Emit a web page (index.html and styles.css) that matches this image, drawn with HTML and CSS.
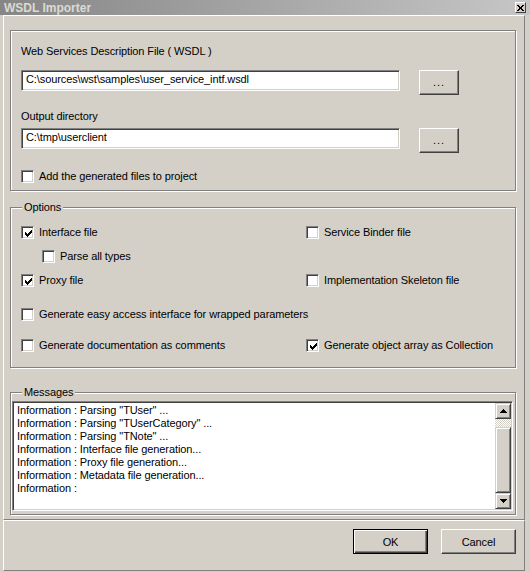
FILE: index.html
```html
<!DOCTYPE html>
<html>
<head>
	<title>WSDL Importer</title>
	<meta charset="UTF-8">
	<link rel="stylesheet" href="styles.css">
</head>
<body>
	<div id="window">
		<div id="title_bar">
			<span id="title">WSDL Importer</span>
			<div id="close_button">
				<svg width="7" height="6" viewBox="0 0 7 6" shape-rendering="crispEdges"><path d="M0 0h2v1h-2zM5 0h2v1h-2zM1 1h2v1h-2zM4 1h2v1h-2zM2 2h3v2h-3zM1 4h2v1h-2zM4 4h2v1h-2zM0 5h2v1h-2zM5 5h2v1h-2z" fill="#000"/></svg>
			</div>
		</div>

		<div id="client">
			<div id="file_panel" class="etched">
				<div class="caption">Web Services Description File ( WSDL )</div>
				<div class="path_row">
					<div class="edit">C:\sources\wst\samples\user_service_intf.wsdl</div>
					<div class="button browse">...</div>
				</div>
				<div class="caption output">Output directory</div>
				<div class="path_row output">
					<div class="edit">C:\tmp\userclient</div>
					<div class="button browse">...</div>
				</div>
				<div class="check add_files"><span class="box"></span>Add the generated files to project</div>
			</div>

			<fieldset id="options" class="group">
				<legend>Options</legend>
				<div class="options_grid">
					<div class="check"><span class="box checked"><svg width="9" height="9" viewBox="0 0 9 9" shape-rendering="crispEdges"><path d="M7 1h1v3h-1zM6 2h1v3h-1zM5 3h1v3h-1zM1 3h1v3h-1zM2 4h1v3h-1zM3 5h1v3h-1zM4 4h1v3h-1z" fill="#000"/></svg></span>Interface file</div>
					<div class="check"><span class="box"></span>Service Binder file</div>
					<div class="check nested"><span class="box"></span>Parse all types</div>
					<div></div>
					<div class="check"><span class="box checked"><svg width="9" height="9" viewBox="0 0 9 9" shape-rendering="crispEdges"><path d="M7 1h1v3h-1zM6 2h1v3h-1zM5 3h1v3h-1zM1 3h1v3h-1zM2 4h1v3h-1zM3 5h1v3h-1zM4 4h1v3h-1z" fill="#000"/></svg></span>Proxy file</div>
					<div class="check"><span class="box"></span>Implementation Skeleton file</div>
					<div class="check wide"><span class="box"></span>Generate easy access interface for wrapped parameters</div>
					<div class="check"><span class="box"></span>Generate documentation as comments</div>
					<div class="check"><span class="box checked"><svg width="9" height="9" viewBox="0 0 9 9" shape-rendering="crispEdges"><path d="M7 1h1v3h-1zM6 2h1v3h-1zM5 3h1v3h-1zM1 3h1v3h-1zM2 4h1v3h-1zM3 5h1v3h-1zM4 4h1v3h-1z" fill="#000"/></svg></span>Generate object array as Collection</div>
				</div>
			</fieldset>

			<fieldset id="messages" class="group">
				<legend>Messages</legend>
				<div class="listbox">
					<div class="lines">
						<div>Information : Parsing "TUser" ...</div>
						<div>Information : Parsing "TUserCategory" ...</div>
						<div>Information : Parsing "TNote" ...</div>
						<div>Information : Interface file generation...</div>
						<div>Information : Proxy file generation...</div>
						<div>Information : Metadata file generation...</div>
						<div>Information :</div>
					</div>
					<div class="scrollbar">
						<div class="arrow"><svg width="7" height="4" viewBox="0 0 7 4" shape-rendering="crispEdges"><path d="M3 0h1v1h1v1h1v1h1v1h-7v-1h1v-1h1v-1h1z" fill="#000"/></svg></div>
						<div class="track"></div>
						<div class="thumb"></div>
						<div class="arrow"><svg width="7" height="4" viewBox="0 0 7 4" shape-rendering="crispEdges"><path d="M0 0h7v1h-1v1h-1v1h-1v1h-1v-1h-1v-1h-1v-1h-1z" fill="#000"/></svg></div>
					</div>
				</div>
			</fieldset>
		</div>

		<div id="button_bar">
			<div class="button default">OK</div>
			<div class="button">Cancel</div>
		</div>
	</div>
</body>
</html>
```

FILE: styles.css
```css
body {
	margin: 0;
	background-color: #d4d0c8;
	font-family: "Liberation Sans", Arial, sans-serif;
	font-size: 11px;
	letter-spacing: -0.1px;
	color: black;
}

#window {
	width: 530px;
	height: 572px;
	display: flex;
	flex-direction: column;
	background-color: #d4d0c8;
}

#title_bar {
	height: 15px;
	display: flex;
	align-items: center;
	justify-content: space-between;
	padding: 0 4px 0 4px;
	background: linear-gradient( to right, #868686, #c6c6c6 );
}

#title {
	font-size: 12px;
	font-weight: bold;
	letter-spacing: 0;
	color: #dcdad4;
}

#close_button {
	width: 11px;
	height: 11px;
	box-sizing: border-box;
	display: flex;
	align-items: center;
	justify-content: center;
	background-color: #d4d0c8;
	border: 1px solid;
	border-color: #fff #404040 #404040 #fff;
}

/* raised client area under the caption */
#client {
	margin: 0 5px 0 3px;
	padding: 14px 8px 4px 6px;
	border: 1px solid;
	border-color: #fff #808080 #808080 #fff;
}

.etched {
	border: 1px solid #808080;
	box-shadow: inset 1px 1px 0 #fff, 1px 1px 0 #fff;
}

#file_panel {
	padding: 14px 8px 7px 10px;
}

.caption {
	line-height: 13px;
}

.caption.output {
	margin-top: 19px;
}

.path_row {
	display: flex;
	align-items: flex-start;
	gap: 19px;
	height: 21px;
	margin-top: 12px;
}

.path_row.output {
	margin-top: 5px;
}

.edit {
	width: 379px;
	height: 21px;
	box-sizing: border-box;
	padding-left: 4px;
	line-height: 17px;
	background-color: #fff;
	border: 1px solid;
	border-color: #808080 #fff #fff #808080;
	box-shadow: inset 1px 1px 0 #404040, inset -1px -1px 0 #d4d0c8;
	white-space: nowrap;
}

.button {
	width: 75px;
	height: 25px;
	box-sizing: border-box;
	display: flex;
	align-items: center;
	justify-content: center;
	background-color: #d4d0c8;
	border: 1px solid;
	border-color: #fff #404040 #404040 #fff;
	box-shadow: inset -1px -1px 0 #808080;
}

.button.browse {
	width: 40px;
	letter-spacing: 1px;
	padding-bottom: 2px;
}

.button.default {
	border-color: #000;
	box-shadow: inset 1px 1px 0 #fff, inset -1px -1px 0 #404040, inset -2px -2px 0 #808080;
}

.check {
	display: flex;
	align-items: center;
	gap: 5px;
	line-height: 13px;
	white-space: nowrap;
}

.add_files {
	margin-top: 21px;
}

.box {
	width: 13px;
	height: 13px;
	box-sizing: border-box;
	flex: none;
	display: flex;
	align-items: center;
	justify-content: center;
	background-color: #fff;
	border: 1px solid;
	border-color: #808080 #fff #fff #808080;
	box-shadow: inset 1px 1px 0 #404040, inset -1px -1px 0 #d4d0c8;
}

.box svg {
	margin: 1px 0 0 1px;
}

/* group boxes */
.group {
	margin: 0;
	padding: 0;
	min-inline-size: 0;
	border: 1px solid #808080;
	box-shadow: inset 1px 1px 0 #fff, 1px 1px 0 #fff;
}

.group legend {
	padding: 0 2px;
	line-height: 13px;
	background-color: #d4d0c8;
}

#options {
	margin-top: 10px;
	padding: 12px 8px 15px 10px;
}

#options legend {
	margin-left: 1px;
}

.options_grid {
	display: grid;
	grid-template-columns: 285px 1fr;
	grid-template-rows: 24px 24px 34px 31px 13px;
	align-items: start;
}

.check.nested {
	margin-left: 21px;
}

.check.wide {
	grid-column: 1 / 3;
}

#messages {
	margin-top: 18px;
	padding: 2px 2px 3px 1px;
}

#messages legend {
	margin-left: 10px;
}

.listbox {
	height: 110px;
	box-sizing: border-box;
	display: flex;
	background-color: #fff;
	border: 1px solid;
	border-color: #808080 #fff #fff #808080;
	box-shadow: inset 1px 1px 0 #404040, inset -1px -1px 0 #d4d0c8;
	padding: 1px;
}

.lines {
	flex: 1;
	padding: 1px 3px;
	line-height: 13px;
	white-space: nowrap;
}

.scrollbar {
	width: 16px;
	display: flex;
	flex-direction: column;
}

.arrow,
.thumb {
	box-sizing: border-box;
	background-color: #d4d0c8;
	border: 1px solid;
	border-color: #d4d0c8 #404040 #404040 #d4d0c8;
	box-shadow: inset 1px 1px 0 #fff, inset -1px -1px 0 #808080;
}

.arrow {
	height: 16px;
	display: flex;
	align-items: center;
	justify-content: center;
}

.track {
	height: 8px;
	background-image: repeating-conic-gradient( #fff 0 25%, #d4d0c8 0 50% );
	background-size: 2px 2px;
}

.thumb {
	flex: 1;
}

#button_bar {
	margin: 0 5px 0 3px;
	padding: 8px 8px 16px 0;
	display: flex;
	justify-content: flex-end;
	gap: 13px;
	border: 1px solid;
	border-color: #fff #808080 #808080 #fff;
}
```
